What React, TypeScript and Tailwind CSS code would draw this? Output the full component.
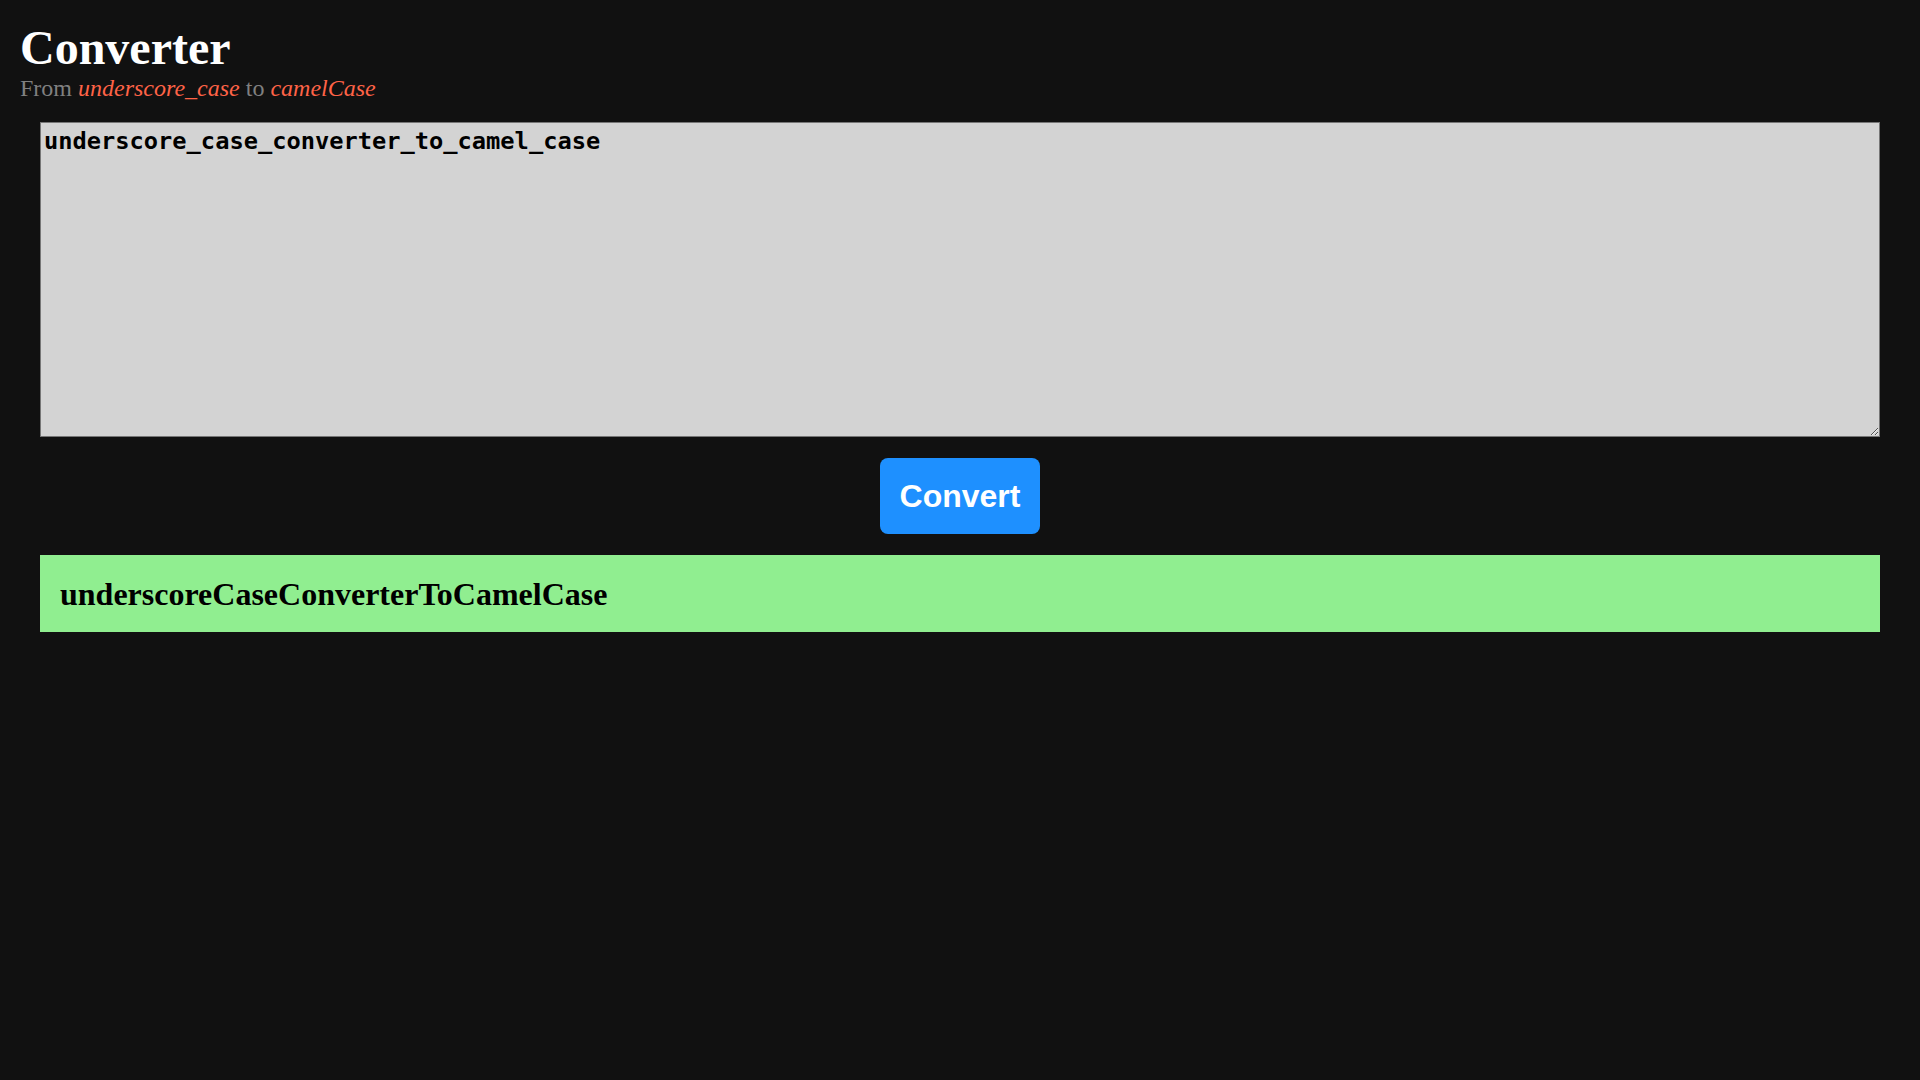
import React from "react";

export default function App() {
  return (
    <div className="min-h-screen w-full bg-[#111111]" style={{ fontFamily: '"Liberation Serif", serif' }}>
      <div className="px-5 pt-6">
        <h1 className="text-[48px] leading-[48px] font-bold text-white">Converter</h1>
        <p className="mt-[4px] text-[24px] leading-[24px] text-[#808080]">
          From <em className="text-[#ff6347]">underscore_case</em> to <em className="text-[#ff6347]">camelCase</em>
        </p>
      </div>
      <div className="mt-[22px] px-10 flex flex-col items-center">
        <textarea
          readOnly
          defaultValue="underscore_case_converter_to_camel_case"
          className="block w-full h-[315px] bg-[#d3d3d3] border border-[#767676] pt-[1px] pl-[3px] pr-[2px] pb-[2px] text-black font-bold text-[23.7px] outline-none resize"
          style={{ fontFamily: '"DejaVu Sans Mono", monospace' }}
        />
        <button
          className="mt-[21px] w-[160px] h-[76px] rounded-[8px] bg-[#1e90ff] text-white font-bold text-[32px] leading-none"
          style={{ fontFamily: '"Liberation Sans", Arial, sans-serif' }}
        >
          Convert
        </button>
        <div className="mt-[21px] w-full h-[77px] bg-[#90ee90] flex items-center px-5">
          <span className="text-[32px] font-bold text-black">underscoreCaseConverterToCamelCase</span>
        </div>
      </div>
    </div>
  );
}
